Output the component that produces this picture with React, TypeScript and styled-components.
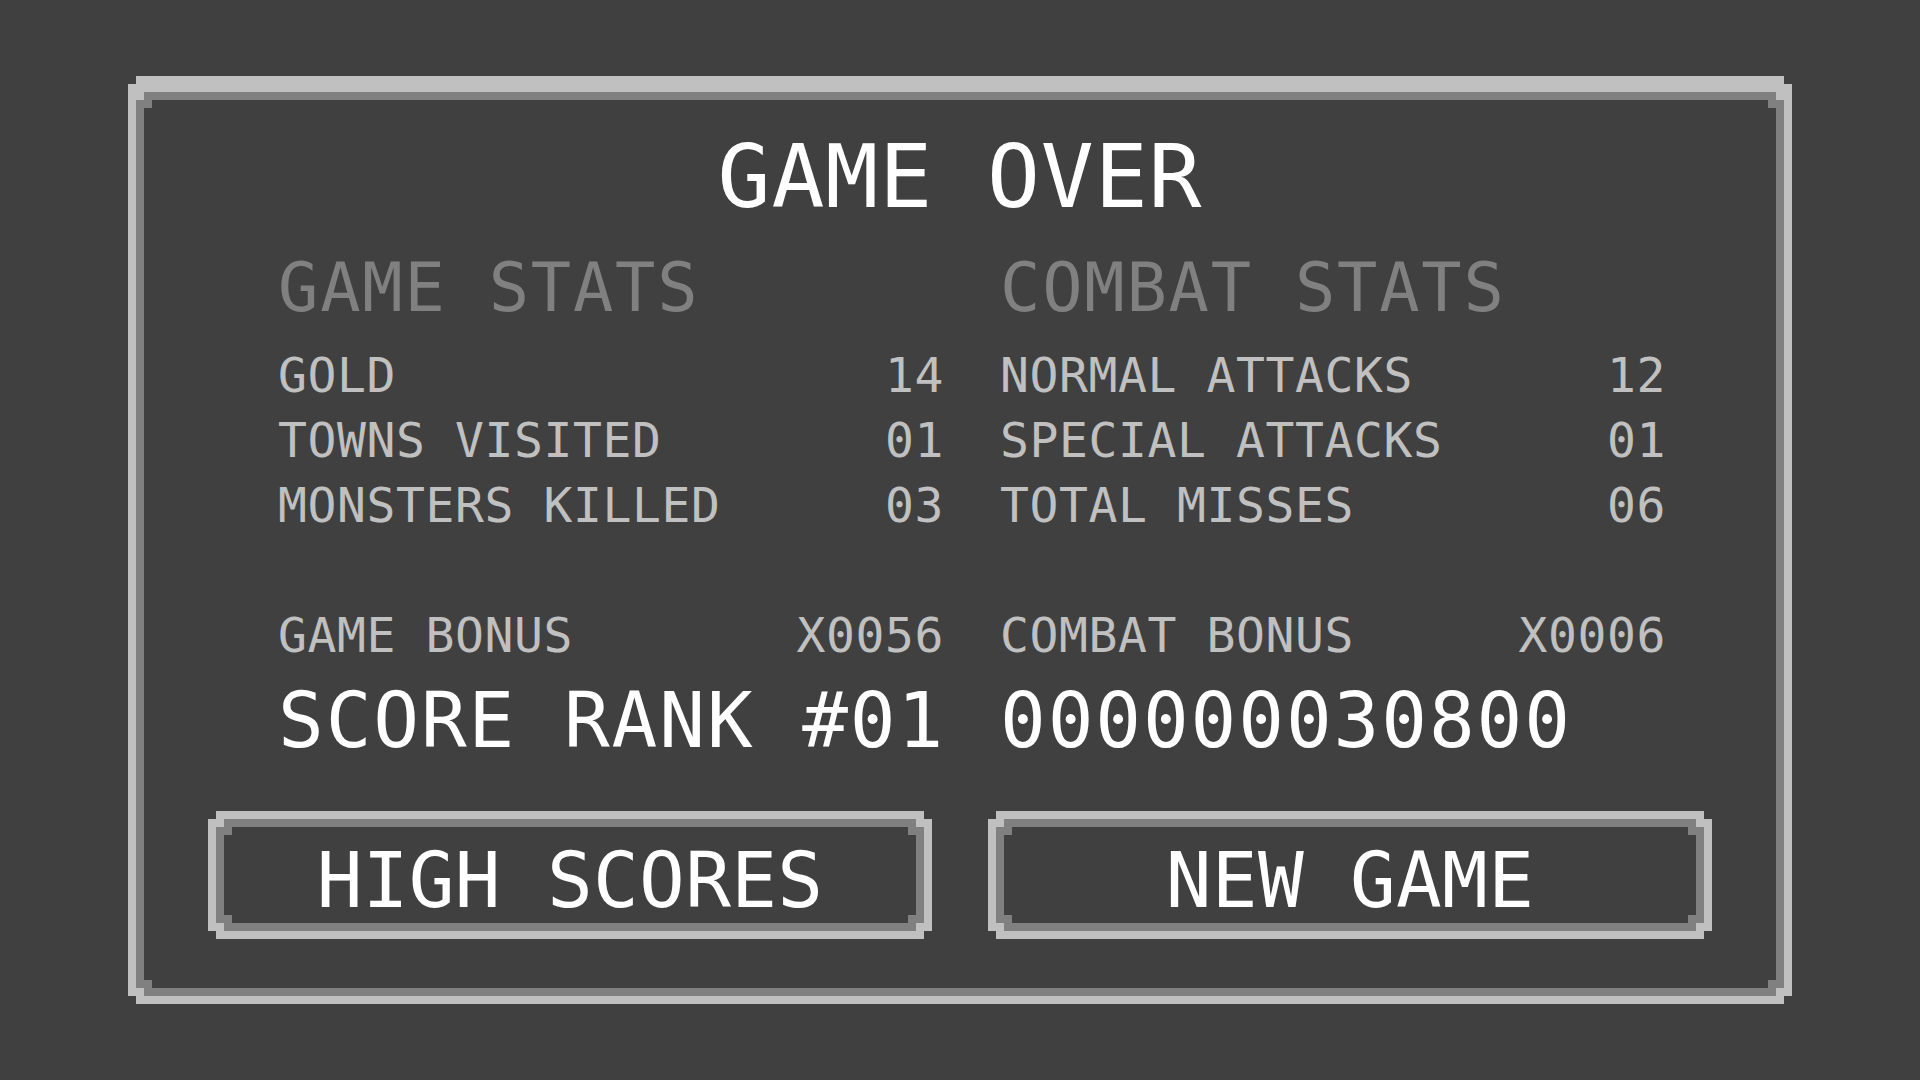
import React from "react";
import styled, { createGlobalStyle, css } from "styled-components";

const Color = {
  bg: "#404040",
  light: "#c0c0c0",
  mid: "#808080",
  white: "#ffffff",
};

const columns = [
  {
    heading: "GAME STATS",
    stats: [
      { label: "GOLD", value: "14" },
      { label: "TOWNS VISITED", value: "01" },
      { label: "MONSTERS KILLED", value: "03" },
    ],
    bonus: { label: "GAME BONUS", value: "X0056" },
    big: "SCORE RANK #01",
  },
  {
    heading: "COMBAT STATS",
    stats: [
      { label: "NORMAL ATTACKS", value: "12" },
      { label: "SPECIAL ATTACKS", value: "01" },
      { label: "TOTAL MISSES", value: "06" },
    ],
    bonus: { label: "COMBAT BONUS", value: "X0006" },
    big: "000000030800",
  },
];

export default function App() {
  return (
    <>
      <GlobalStyle />
      <Screen>
        <OuterFrame>
          <MidFrame>
            <Panel>
              <Title>GAME OVER</Title>
              <StatsGrid>
                {columns.map((col) => (
                  <Column key={col.heading}>
                    <SectionHeading>{col.heading}</SectionHeading>
                    <StatList>
                      {col.stats.map((s) => (
                        <StatRow key={s.label}>
                          <span>{s.label}</span>
                          <span>{s.value}</span>
                        </StatRow>
                      ))}
                    </StatList>
                    <BonusRow>
                      <span>{col.bonus.label}</span>
                      <span>{col.bonus.value}</span>
                    </BonusRow>
                    <BigLine>{col.big}</BigLine>
                  </Column>
                ))}
              </StatsGrid>
              <ButtonRow>
                <PixelButton>
                  <ButtonMid>
                    <ButtonFace>HIGH SCORES</ButtonFace>
                  </ButtonMid>
                </PixelButton>
                <PixelButton>
                  <ButtonMid>
                    <ButtonFace>NEW GAME</ButtonFace>
                  </ButtonMid>
                </PixelButton>
              </ButtonRow>
            </Panel>
          </MidFrame>
        </OuterFrame>
      </Screen>
    </>
  );
}

// stepped 8px corners, like a pixel-art frame
const notched = css`
  clip-path: polygon(
    8px 0,
    calc(100% - 8px) 0,
    calc(100% - 8px) 8px,
    100% 8px,
    100% calc(100% - 8px),
    calc(100% - 8px) calc(100% - 8px),
    calc(100% - 8px) 100%,
    8px 100%,
    8px calc(100% - 8px),
    0 calc(100% - 8px),
    0 8px,
    8px 8px
  );
`;

const GlobalStyle = createGlobalStyle`
  html, body {
    margin: 0;
    padding: 0;
    background: ${Color.bg};
  }
  body {
    font-family: "DejaVu Sans Mono", "Liberation Mono", monospace;
  }
  * {
    box-sizing: border-box;
  }
`;

const Screen = styled.div`
  width: 100%;
  height: 100vh;
  display: flex;
  align-items: center;
  justify-content: center;
`;

const OuterFrame = styled.div`
  ${notched};
  width: 1664px;
  background: ${Color.light};
  padding: 16px 8px 8px;
`;

const MidFrame = styled.div`
  ${notched};
  background: ${Color.mid};
  padding: 8px;
`;

const Panel = styled.div`
  ${notched};
  background: ${Color.bg};
  padding: 33px 64px 49px;
  display: flex;
  flex-direction: column;
`;

const Title = styled.h1`
  margin: 0;
  font-size: 88px;
  line-height: 1;
  font-weight: 400;
  letter-spacing: 0.9px;
  color: ${Color.white};
  text-align: center;
`;

const StatsGrid = styled.div`
  display: grid;
  grid-template-columns: 666px 666px;
  column-gap: 56px;
  margin: 34px 0 0 70px;
`;

const Column = styled.div`
  display: flex;
  flex-direction: column;
`;

const SectionHeading = styled.h2`
  margin: 0;
  font-size: 67px;
  line-height: 1;
  font-weight: 400;
  letter-spacing: 1.8px;
  color: ${Color.mid};
`;

const StatList = styled.div`
  margin-top: 21px;
  display: flex;
  flex-direction: column;
`;

const StatRow = styled.div`
  display: flex;
  justify-content: space-between;
  font-size: 48px;
  line-height: 65px;
  letter-spacing: 0.6px;
  color: ${Color.light};
`;

const BonusRow = styled(StatRow)`
  margin-top: 73px;
  line-height: 48px;
`;

const BigLine = styled.div`
  margin-top: 24px;
  font-size: 76px;
  line-height: 1;
  letter-spacing: 1.9px;
  color: ${Color.white};
  white-space: nowrap;
`;

const ButtonRow = styled.div`
  margin-top: 52px;
  display: flex;
  justify-content: center;
  gap: 56px;
`;

const PixelButton = styled.button`
  ${notched};
  width: 724px;
  border: none;
  padding: 8px;
  background: ${Color.light};
  cursor: pointer;
  font: inherit;
`;

const ButtonMid = styled.span`
  ${notched};
  display: block;
  background: ${Color.mid};
  padding: 8px;
`;

const ButtonFace = styled.span`
  ${notched};
  height: 96px;
  padding-top: 12px;
  display: flex;
  align-items: center;
  justify-content: center;
  background: ${Color.bg};
  font-size: 76px;
  line-height: 1;
  letter-spacing: 0.3px;
  color: ${Color.white};
`;
